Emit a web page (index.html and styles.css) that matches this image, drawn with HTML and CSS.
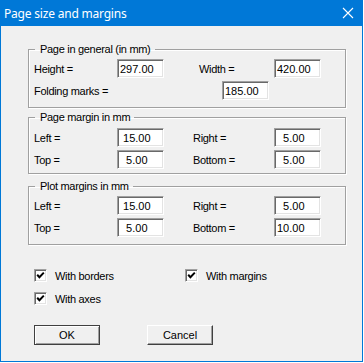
FILE: index.html
```html
<!DOCTYPE html>
<html lang="en">
<head>
    <meta charset="UTF-8">
    <title>Page size and margins</title>
    <link rel="stylesheet" href="styles.css">
</head>
<body>
<div class="window">
    <div class="titlebar">
        <span class="title">Page size and margins</span>
        <svg class="close" width="12" height="12" viewBox="0 0 12 12">
            <path d="M1 1 L11 11 M11 1 L1 11" stroke="#fff" stroke-width="1.1" fill="none"/>
        </svg>
    </div>

    <div class="client">
        <fieldset class="group group-general">
            <legend>Page in general (in mm)</legend>
            <div class="fields fields-general">
                <span class="label">Height =</span>
                <span class="edit">297.00</span>
                <span></span>
                <span class="label">Width =</span>
                <span class="edit">420.00</span>
            </div>
            <div class="fold-row">
                <span class="label fold-label">Folding marks =</span>
                <span class="edit">185.00</span>
            </div>
        </fieldset>

        <fieldset class="group group-page">
            <legend>Page margin in mm</legend>
            <div class="fields">
                <span class="label">Left =</span>
                <span class="edit">&nbsp;15.00</span>
                <span></span>
                <span class="label">Right =</span>
                <span class="edit">&nbsp;&nbsp;5.00</span>

                <span class="label">Top =</span>
                <span class="edit">&nbsp;&nbsp;5.00</span>
                <span></span>
                <span class="label">Bottom =</span>
                <span class="edit">&nbsp;&nbsp;5.00</span>
            </div>
        </fieldset>

        <fieldset class="group group-plot">
            <legend>Plot margins in mm</legend>
            <div class="fields">
                <span class="label">Left =</span>
                <span class="edit">&nbsp;15.00</span>
                <span></span>
                <span class="label">Right =</span>
                <span class="edit">&nbsp;&nbsp;5.00</span>

                <span class="label">Top =</span>
                <span class="edit">&nbsp;&nbsp;5.00</span>
                <span></span>
                <span class="label">Bottom =</span>
                <span class="edit">10.00</span>
            </div>
        </fieldset>

        <div class="checks">
            <label class="check">
                <span class="box"><svg width="9" height="9" viewBox="0 0 9 9"><path d="M1.2 3.8 L3.4 6.2 L7.8 1.6" stroke="#000" stroke-width="2" fill="none"/></svg></span>
                With borders
            </label>
            <label class="check">
                <span class="box"><svg width="9" height="9" viewBox="0 0 9 9"><path d="M1.2 3.8 L3.4 6.2 L7.8 1.6" stroke="#000" stroke-width="2" fill="none"/></svg></span>
                With margins
            </label>
            <label class="check">
                <span class="box"><svg width="9" height="9" viewBox="0 0 9 9"><path d="M1.2 3.8 L3.4 6.2 L7.8 1.6" stroke="#000" stroke-width="2" fill="none"/></svg></span>
                With axes
            </label>
        </div>

        <div class="buttons">
            <button class="btn btn-default">OK</button>
            <button class="btn">Cancel</button>
        </div>
    </div>
</div>
</body>
</html>
```

FILE: styles.css
```css
body {
    margin: 0;
    background: #fff;
    font-family: 'Liberation Sans', Arial, sans-serif;
    font-size: 11px;
    letter-spacing: -0.3px;
    color: #000;
}

.window {
    box-sizing: border-box;
    width: 363px;
    height: 362px;
    border: 1px solid #0078d7;
    background: #f0f0f0;
    display: flex;
    flex-direction: column;
}

.titlebar {
    height: 25px;
    background: #0078d7;
    display: flex;
    align-items: center;
    justify-content: space-between;
    padding: 0 8px 0 3px;
}

.title {
    font-family: 'Noto Sans', sans-serif;
    font-size: 12px;
    letter-spacing: -0.2px;
    color: #fff;
    margin-top: -1px;
}

.close {
    margin-top: -1px;
}

.client {
    padding: 16px 0 0 27px;
}

.group {
    box-sizing: border-box;
    width: 318px;
    margin: 0;
    padding: 3px 5px 7px 5px;
    border: 1px solid #a0a0a0;
    box-shadow: inset 1px 1px 0 #fff, 1px 1px 0 #fff;
}

.group legend {
    margin-left: 1px;
    padding: 0 4px 0 5px;
    line-height: 14px;
}

.group-page {
    margin-top: 2px;
    padding-top: 4px;
    padding-bottom: 4px;
}

.group-plot {
    margin-top: 5px;
}

.fields {
    display: grid;
    grid-template-columns: 83px 47px 29px 81px 47px;
    grid-auto-rows: 19px;
    row-gap: 3px;
    align-items: center;
}

.fields-general {
    grid-template-columns: 83px 47px 35px 75px 47px;
}

.fold-row {
    display: flex;
    align-items: center;
    height: 19px;
    margin-top: 3px;
}

.fold-label {
    width: 188px;
}

.edit {
    box-sizing: border-box;
    width: 47px;
    height: 19px;
    display: flex;
    align-items: center;
    padding-left: 2px;
    background: #fff;
    letter-spacing: 0;
    border: 1px solid;
    border-color: #a0a0a0 #fff #fff #a0a0a0;
    box-shadow: inset 1px 1px 0 #696969, inset -1px -1px 0 #e3e3e3;
}

.checks {
    display: grid;
    grid-template-columns: 151px auto;
    grid-auto-rows: 13px;
    row-gap: 10px;
    margin: 24px 0 0 6px;
}

.check {
    display: flex;
    align-items: center;
    gap: 8px;
}

.box {
    box-sizing: border-box;
    width: 13px;
    height: 13px;
    display: flex;
    align-items: center;
    justify-content: center;
    background: #fff;
    border: 1px solid;
    border-color: #a0a0a0 #fff #fff #a0a0a0;
    box-shadow: inset 1px 1px 0 #696969, inset -1px -1px 0 #e3e3e3;
}

.buttons {
    display: flex;
    gap: 47px;
    margin: 20px 0 0 6px;
}

.btn {
    box-sizing: border-box;
    width: 66px;
    height: 20px;
    padding: 0;
    font: inherit;
    color: #000;
    background: #f0f0f0;
    border: 1px solid;
    border-color: #fff #404040 #404040 #fff;
    box-shadow: inset -1px -1px 0 #a0a0a0;
}

.btn-default {
    border-color: #404040;
    box-shadow: inset 1px 1px 0 #fff, inset -1px -1px 0 #a0a0a0;
}
```
